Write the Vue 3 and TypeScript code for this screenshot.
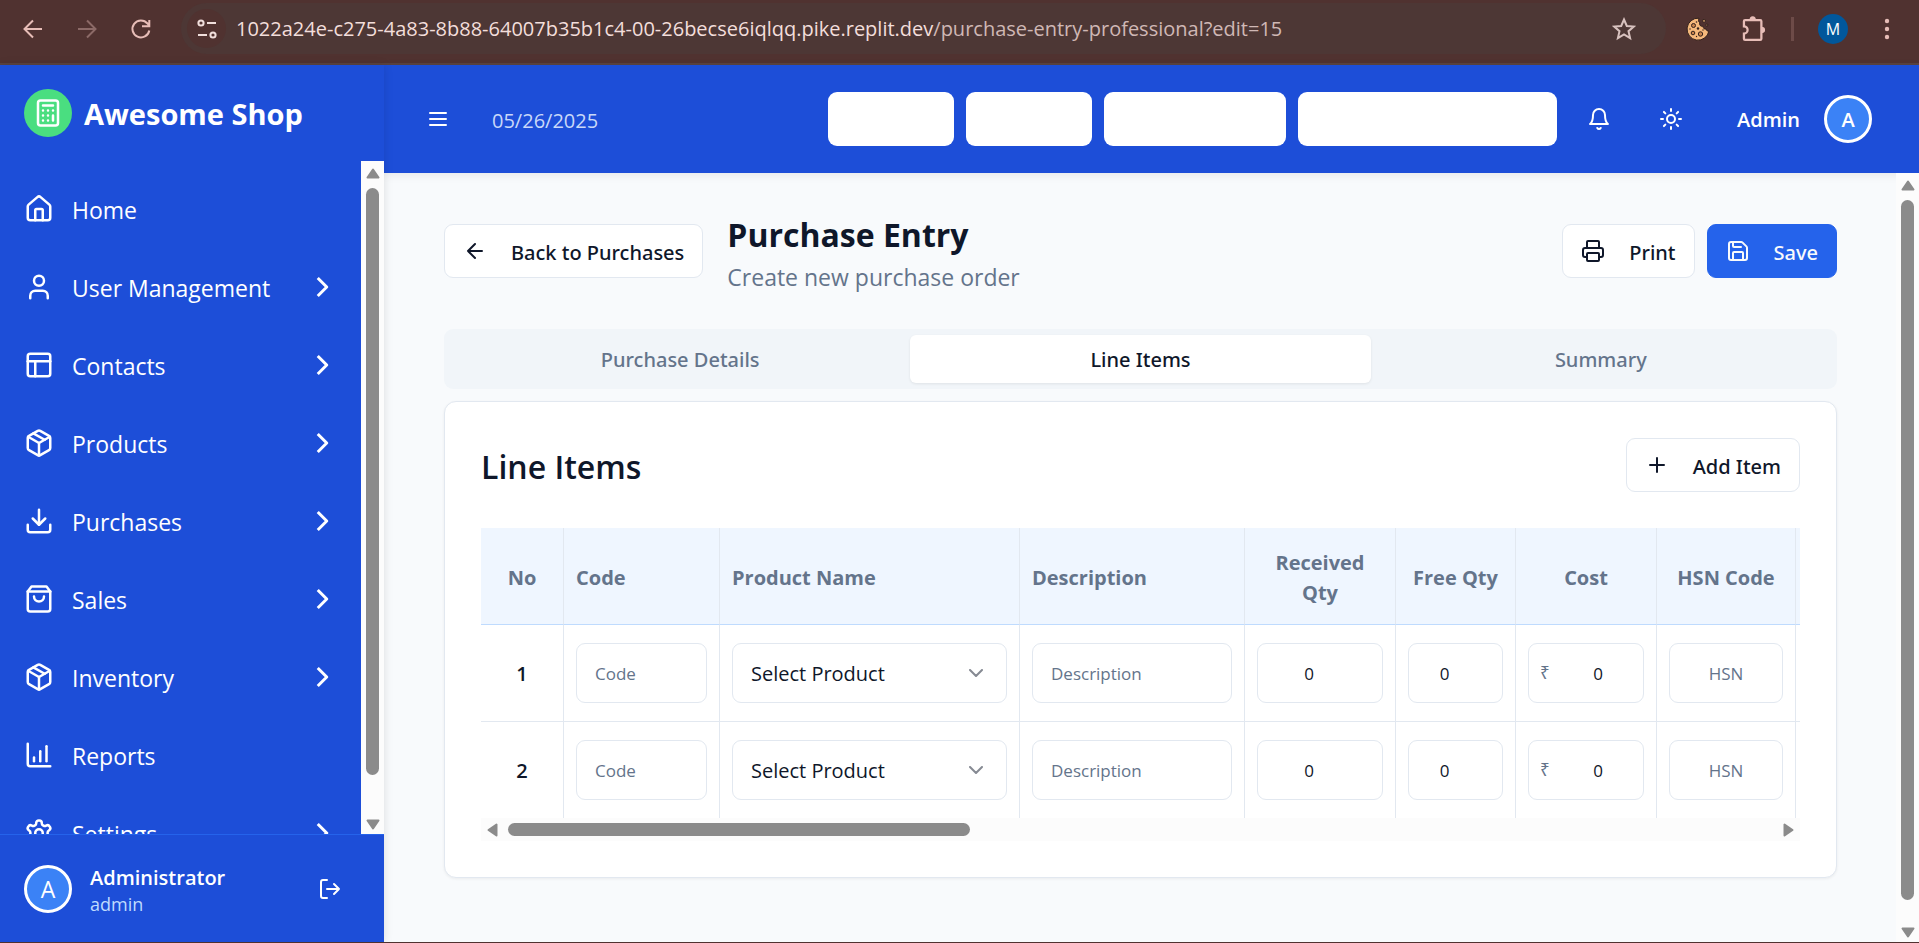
<script setup lang="ts">
import { ref } from 'vue'

interface NavItem { label: string; paths: string[]; expandable: boolean }
interface Line { id: number; code: string; product: string; description: string; received: number; free: number; cost: number; hsn: string }

const box = [
  'M11 21.73a2 2 0 0 0 2 0l7-4A2 2 0 0 0 21 16V8a2 2 0 0 0-1-1.73l-7-4a2 2 0 0 0-2 0l-7 4A2 2 0 0 0 3 8v8a2 2 0 0 0 1 1.73z',
  'M12 22V12', 'M3.3 7L12 12l8.7-5', 'm7.5 4.27 9 5.15',
]

const navItems: NavItem[] = [
  { label: 'Home', expandable: false, paths: ['M15 21v-8a1 1 0 0 0-1-1h-4a1 1 0 0 0-1 1v8', 'M3 10a2 2 0 0 1 .709-1.528l7-5.999a2 2 0 0 1 2.582 0l7 5.999A2 2 0 0 1 21 10v9a2 2 0 0 1-2 2H5a2 2 0 0 1-2-2z'] },
  { label: 'User Management', expandable: true, paths: ['M19 21v-2a4 4 0 0 0-4-4H9a4 4 0 0 0-4 4v2', 'M8 7a4 4 0 1 0 8 0a4 4 0 1 0-8 0'] },
  { label: 'Contacts', expandable: true, paths: ['M5 3h14a2 2 0 0 1 2 2v14a2 2 0 0 1-2 2H5a2 2 0 0 1-2-2V5a2 2 0 0 1 2-2z', 'M3 9h18', 'M9 21V9'] },
  { label: 'Products', expandable: true, paths: box },
  { label: 'Purchases', expandable: true, paths: ['M21 15v4a2 2 0 0 1-2 2H5a2 2 0 0 1-2-2v-4', 'M7 10l5 5 5-5', 'M12 15V3'] },
  { label: 'Sales', expandable: true, paths: ['M6 2 3 6v14a2 2 0 0 0 2 2h14a2 2 0 0 0 2-2V6l-3-4z', 'M3 6h18', 'M16 10a4 4 0 0 1-8 0'] },
  { label: 'Inventory', expandable: true, paths: box },
  { label: 'Reports', expandable: false, paths: ['M3 3v16a2 2 0 0 0 2 2h16', 'M18 17V5', 'M13 17V9', 'M8 17v-3'] },
  { label: 'Settings', expandable: true, paths: ['M12.22 2h-.44a2 2 0 0 0-2 2v.18a2 2 0 0 1-1 1.73l-.43.25a2 2 0 0 1-2 0l-.15-.08a2 2 0 0 0-2.73.73l-.22.38a2 2 0 0 0 .73 2.73l.15.1a2 2 0 0 1 1 1.72v.51a2 2 0 0 1-1 1.74l-.15.09a2 2 0 0 0-.73 2.73l.22.38a2 2 0 0 0 2.73.73l.15-.08a2 2 0 0 1 2 0l.43.25a2 2 0 0 1 1 1.73V20a2 2 0 0 0 2 2h.44a2 2 0 0 0 2-2v-.18a2 2 0 0 1 1-1.73l.43-.25a2 2 0 0 1 2 0l.15.08a2 2 0 0 0 2.73-.73l.22-.39a2 2 0 0 0-.73-2.73l-.15-.08a2 2 0 0 1-1-1.74v-.5a2 2 0 0 1 1-1.74l.15-.09a2 2 0 0 0 .73-2.73l-.22-.38a2 2 0 0 0-2.73-.73l-.15.08a2 2 0 0 1-2 0l-.43-.25a2 2 0 0 1-1-1.73V4a2 2 0 0 0-2-2z', 'M9 12a3 3 0 1 0 6 0a3 3 0 1 0-6 0'] },
]

const tabs = ['Purchase Details', 'Line Items', 'Summary']
const activeTab = ref('Line Items')

const newLine = (id: number): Line => ({ id, code: '', product: '', description: '', received: 0, free: 0, cost: 0, hsn: '' })
const lines = ref<Line[]>([newLine(1), newLine(2)])
const addLine = () => lines.value.push(newLine(lines.value.length + 1))
</script>

<template>
  <div class="window">
    <div class="browser">
      <button class="tool" aria-label="Back"><svg viewBox="0 0 24 24"><path d="M21 12H4M12 3.500L3.500 12l8.500 8.500" /></svg></button>
      <button class="tool dim" aria-label="Forward"><svg viewBox="0 0 24 24"><path d="M3 12h17M12 3.500l8.500 8.500-8.500 8.500" /></svg></button>
      <button class="tool" aria-label="Reload"><svg viewBox="0 0 24 24"><path d="M20.300 13.500A8.500 8.500 0 1 1 18.500 6.500L20 8.500M20.300 3v6.300H13" /></svg></button>
      <div class="address">
        <button class="site" aria-label="Site information">
          <svg viewBox="0 0 24 24"><circle cx="6" cy="6" r="2.600" /><path d="M12 6h9M3 18h9" /><circle cx="18" cy="18" r="2.600" /></svg>
        </button>
        <p class="url">1022a24e-c275-4a83-8b88-64007b35b1c4-00-26becse6iqlqq.pike.replit.dev<span>/purchase-entry-professional?edit=15</span></p>
        <button class="tool star" aria-label="Bookmark"><svg viewBox="0 0 24 24"><path d="M12 2.500l2.800 6.500 7 .6-5.300 4.600 1.600 6.900-6.100-3.700-6.100 3.700 1.600-6.900-5.300-4.600 7-.6z" /></svg></button>
      </div>
      <button class="tool cookie" aria-label="Cookies">
        <svg viewBox="0 0 24 24"><path class="biscuit" d="M13 1.200A11 11 0 1 0 22.900 14c-1.700.3-2.700-.5-2.700-2-2.100.3-3.300-.8-2.900-2.700-2.800.4-4.300-1.300-3.500-3.600-1.500-1-1.700-2.800-.8-4.500z" /><circle class="chip" cx="7.500" cy="8.500" r="2" /><circle class="chip" cx="7" cy="16" r="1.800" /><circle class="chip" cx="14.500" cy="17" r="2.200" /><circle class="crumb" cx="12" cy="11.500" r="1.200" /><circle class="crumb" cx="10.500" cy="5" r=".8" /><circle class="crumb" cx="4" cy="12" r=".7" /><circle class="crumb" cx="10.500" cy="19.500" r=".7" /><circle class="crumb" cx="17" cy="13" r=".7" /><path class="biscuit" d="M17 2.500l2.500.5-.6 2.400-2.300-.6zM20 7l2 .4-.5 1.700-1.800-.4z" /></svg>
      </button>
      <button class="tool puzzle" aria-label="Extensions"><svg viewBox="0 0 24 24"><path d="M4.500 4.500H18a1 1 0 0 1 1 1V21a1 1 0 0 1-1 1H4.500a1 1 0 0 1-1-1v-4.500a3.200 3.200 0 0 0 0-6.500V5.500a1 1 0 0 1 1-1z" /><path class="solid" d="M8.500 4.500a2.800 3.300 0 0 1 5.600 0zM19 10.500a3.300 2.800 0 0 1 0 5.600z" /></svg></button>
      <span class="divider"></span>
      <button class="profile" aria-label="Profile">M</button>
      <button class="tool more" aria-label="More"><svg viewBox="0 0 24 24"><circle cx="12" cy="4" r="2.200" /><circle cx="12" cy="12" r="2.200" /><circle cx="12" cy="20" r="2.200" /></svg></button>
    </div>

    <div class="app">
      <aside class="sidebar">
        <div class="brand">
          <span class="logo"><svg class="icon lg" viewBox="0 0 24 24"><rect x="4" y="2" width="16" height="20" rx="2" /><path d="M8 6h8M16 14v4M16 10h.01M12 10h.01M8 10h.01M12 14h.01M8 14h.01M12 18h.01M8 18h.01" /></svg></span>
          <strong>Awesome Shop</strong>
        </div>
        <div class="nav-area">
          <nav>
            <a v-for="item in navItems" :key="item.label" href="#">
              <svg class="icon lg" viewBox="0 0 24 24"><path v-for="d in item.paths" :key="d" :d="d" /></svg>
              <span>{{ item.label }}</span>
              <svg v-if="item.expandable" class="icon chevron" viewBox="0 0 24 24"><path d="M8.500 6l6 6-6 6" /></svg>
            </a>
          </nav>
          <div class="scroll-y">
            <svg viewBox="0 0 14 11"><path d="M7 1.500L12.500 9.500h-11z" /></svg>
            <div class="track"><span class="thumb nav-thumb"></span></div>
            <svg viewBox="0 0 14 11"><path d="M7 9.500L1.500 1.500h11z" /></svg>
          </div>
        </div>
        <div class="account">
          <span class="avatar plain">A</span>
          <div class="who"><strong>Administrator</strong><span>admin</span></div>
          <button class="ghost" aria-label="Log out"><svg class="icon" viewBox="0 0 24 24"><path d="M9 21H5a2 2 0 0 1-2-2V5a2 2 0 0 1 2-2h4M16 17l5-5-5-5M21 12H9" /></svg></button>
        </div>
      </aside>

      <div class="page">
        <header class="topbar">
          <button class="ghost" aria-label="Toggle menu"><svg class="icon" viewBox="0 0 24 24"><path d="M4 6h16M4 12h16M4 18h16" /></svg></button>
          <time>05/26/2025</time>
          <div class="shortcuts">
            <button class="w-a" aria-label="Shortcut 1"></button>
            <button class="w-a" aria-label="Shortcut 2"></button>
            <button class="w-b" aria-label="Shortcut 3"></button>
            <button class="w-c" aria-label="Shortcut 4"></button>
          </div>
          <div class="actions">
            <button class="ghost" aria-label="Notifications"><svg class="icon" viewBox="0 0 24 24"><path d="M6 8a6 6 0 0 1 12 0c0 7 3 9 3 9H3s3-2 3-9M10.300 21a1.940 1.940 0 0 0 3.400 0" /></svg></button>
            <button class="ghost" aria-label="Theme"><svg class="icon" viewBox="0 0 24 24"><circle cx="12" cy="12" r="4" /><path d="M12 2v2M12 20v2M4.930 4.930l1.410 1.410M17.660 17.660l1.410 1.410M2 12h2M20 12h2M6.340 17.660l-1.410 1.410M19.070 4.930l-1.410 1.410" /></svg></button>
          </div>
          <button class="user"><span>Admin</span><span class="avatar">A</span></button>
        </header>

        <div class="body">
          <main>
            <div class="heading">
              <button class="btn"><svg class="icon" viewBox="0 0 24 24"><path d="M12 19l-7-7 7-7M19 12H5" /></svg><span>Back to Purchases</span></button>
              <div class="titles"><h1>Purchase Entry</h1><p>Create new purchase order</p></div>
              <div class="buttons">
                <button class="btn"><svg class="icon" viewBox="0 0 24 24"><path d="M6 18H4a2 2 0 0 1-2-2v-5a2 2 0 0 1 2-2h16a2 2 0 0 1 2 2v5a2 2 0 0 1-2 2h-2M6 9V3a1 1 0 0 1 1-1h10a1 1 0 0 1 1 1v6" /><rect x="6" y="14" width="12" height="8" rx="1" /></svg><span>Print</span></button>
                <button class="btn primary"><svg class="icon" viewBox="0 0 24 24"><path d="M15.200 3a2 2 0 0 1 1.400.6l3.800 3.800a2 2 0 0 1 .6 1.400V19a2 2 0 0 1-2 2H5a2 2 0 0 1-2-2V5a2 2 0 0 1 2-2zM17 21v-7a1 1 0 0 0-1-1H8a1 1 0 0 0-1 1v7M7 3v4a1 1 0 0 0 1 1h7" /></svg><span>Save</span></button>
              </div>
            </div>

            <div class="tabs" role="tablist">
              <button v-for="tab in tabs" :key="tab" role="tab" :aria-selected="tab === activeTab" :class="{ active: tab === activeTab }" @click="activeTab = tab">{{ tab }}</button>
            </div>

            <section class="card">
              <div class="card-head">
                <h2>Line Items</h2>
                <button class="btn" @click="addLine"><svg class="icon" viewBox="0 0 24 24"><path d="M5 12h14M12 5v14" /></svg><span>Add Item</span></button>
              </div>
              <div class="table-wrap">
                <table>
                  <colgroup><col class="c-no" /><col class="c-code" /><col class="c-product" /><col class="c-desc" /><col class="c-recv" /><col class="c-free" /><col class="c-cost" /><col class="c-hsn" /><col /></colgroup>
                  <thead>
                    <tr><th>No</th><th class="left">Code</th><th class="left">Product Name</th><th class="left">Description</th><th>Received Qty</th><th>Free Qty</th><th>Cost</th><th>HSN Code</th><th class="rest"></th></tr>
                  </thead>
                  <tbody>
                    <tr v-for="line in lines" :key="line.id">
                      <td class="no">{{ line.id }}</td>
                      <td><input v-model="line.code" type="text" placeholder="Code" aria-label="Code" /></td>
                      <td>
                        <div class="select">
                          <select v-model="line.product" aria-label="Product"><option value="">Select Product</option></select>
                          <svg class="icon" viewBox="0 0 24 24"><path d="M6 9l6 6 6-6" /></svg>
                        </div>
                      </td>
                      <td><input v-model="line.description" type="text" placeholder="Description" aria-label="Description" /></td>
                      <td><input v-model="line.received" class="num" type="number" aria-label="Received quantity" /></td>
                      <td><input v-model="line.free" class="num" type="number" aria-label="Free quantity" /></td>
                      <td><div class="money"><span>₹</span><input v-model="line.cost" type="number" aria-label="Cost" /></div></td>
                      <td><input v-model="line.hsn" class="mid" type="text" placeholder="HSN" aria-label="HSN code" /></td>
                      <td class="rest"></td>
                    </tr>
                  </tbody>
                </table>
              </div>
              <div class="scroll-x">
                <svg viewBox="0 0 11 14"><path d="M1.500 7L9.500 1.500v11z" /></svg>
                <div class="track"><span class="thumb"></span></div>
                <svg viewBox="0 0 11 14"><path d="M9.500 7L1.500 1.500v11z" /></svg>
              </div>
            </section>
          </main>
          <div class="scroll-y">
            <svg viewBox="0 0 14 11"><path d="M7 1.500L12.500 9.500h-11z" /></svg>
            <div class="track"><span class="thumb page-thumb"></span></div>
            <svg viewBox="0 0 14 11"><path d="M7 9.500L1.500 1.500h11z" /></svg>
          </div>
        </div>
      </div>
    </div>
  </div>
</template>

<style>
body { margin: 0; }
</style>

<style scoped>
* { box-sizing: border-box; }
.window { height: 100vh; display: flex; flex-direction: column; font-family: "Open Sans", "Noto Sans", sans-serif; font-size: 20px; color: #0f172a; overflow: hidden; border-bottom: 1px solid #503230; }
button, input, select { font: inherit; color: inherit; margin: 0; }
button { border: 0; padding: 0; background: none; cursor: pointer; }
h1, h2, p { margin: 0; }
.icon { width: 24px; height: 24px; flex: none; fill: none; stroke: currentColor; stroke-width: 2; stroke-linecap: round; stroke-linejoin: round; }
.icon.lg { width: 30px; height: 30px; }
.icon.chevron { width: 36px; height: 36px; margin-left: auto; stroke-linecap: butt; }

.browser { flex: none; height: 65px; display: flex; align-items: center; padding: 0 20px 6px 21px; background: #503230; border-bottom: 2px solid #5a4340; }
.tool { width: 24px; height: 24px; display: flex; flex: none; color: #e7bdb7; }
.tool + .tool { margin-left: 30px; }
.tool svg { width: 100%; height: 100%; fill: none; stroke: currentColor; stroke-width: 2; }
.tool.dim { color: #8c6a67; }
.address { flex: 1; height: 51px; margin: 0 20px 0 28px; padding: 0 30px 0 6px; display: flex; align-items: center; border-radius: 26px; background: #4d3735; }
.site { width: 39px; height: 39px; flex: none; display: grid; place-items: center; border-radius: 50%; background: #503230; color: #f0dedb; }
.site svg { width: 24px; height: 24px; fill: none; stroke: currentColor; stroke-width: 2; }
.url { flex: 1; margin-left: 10px; white-space: nowrap; color: #f3dedb; }
.url span { color: #d0b8b5; }
.star { color: #d8c2bf; }
.cookie .biscuit { fill: #f5b97c; stroke: #33211c; stroke-width: 1; }
.cookie .chip { fill: #c9854f; stroke: #33211c; stroke-width: 1; }
.cookie .crumb { fill: #33211c; stroke: none; }
.tool.puzzle { width: 27px; height: 27px; }
.tool .solid { fill: currentColor; stroke: none; }
.divider { width: 3px; height: 24px; margin: 0 24px; background: #6d4b48; }
.profile { width: 30px; height: 30px; border-radius: 50%; background: #01579b; color: #fff; font-size: 16px; }
.more { margin-left: 27px; }
.more svg { fill: currentColor; stroke: none; }

.app { flex: 1; min-height: 0; display: flex; }
.sidebar { width: 384px; flex: none; display: flex; flex-direction: column; background: #1d4ed8; color: #fff; box-shadow: 0 0 9px rgba(0, 0, 0, .12); z-index: 1; }
.brand { height: 96px; flex: none; display: flex; align-items: center; gap: 12px; padding: 0 24px; }
.brand strong { font-size: 29px; line-height: 42px; padding-top: 2px; }
.logo { width: 48px; height: 48px; flex: none; display: grid; place-items: center; border-radius: 50%; background: #4ade80; }
.nav-area { flex: 1; min-height: 0; display: flex; overflow: hidden; }
nav { flex: 1; padding: 12px 0; display: flex; flex-direction: column; gap: 6px; }
nav a { height: 72px; flex: none; display: flex; align-items: center; gap: 18px; padding: 0 20px 0 24px; color: #fff; text-decoration: none; font-size: 23px; line-height: 36px; }
nav a span { padding-top: 2px; }
.scroll-y { width: 23px; flex: none; padding: 7px 0 4px; display: flex; flex-direction: column; align-items: center; background: #fcfcfc; }
.scroll-y svg { width: 14px; height: 11px; flex: none; fill: #8b8b8b; stroke: #8b8b8b; stroke-width: 2; stroke-linejoin: round; }
.scroll-y .track { flex: 1; margin: 9px 0; }
.thumb { display: block; border-radius: 7px; background: #8b8b8b; }
.nav-thumb { width: 13px; height: 94.4%; }
.page-thumb { width: 13px; height: 97.5%; }
.account { height: 108px; flex: none; display: flex; align-items: center; padding: 0 27px 0 24px; border-top: 1px solid #2563eb; }
.avatar { width: 48px; height: 48px; flex: none; display: grid; place-items: center; border: 3px solid #fff; border-radius: 50%; background: #3b82f6; font-weight: 600; }
.avatar.plain { font-size: 23px; font-weight: 400; }
.who { flex: 1; margin-left: 18px; padding-top: 4px; display: flex; flex-direction: column; line-height: 26px; }
.who strong { font-weight: 600; }
.who span { font-size: 18px; color: #bfdbfe; }
.ghost { width: 54px; height: 54px; flex: none; display: grid; place-items: center; }

.page { flex: 1; min-width: 0; display: flex; flex-direction: column; background: #f8fafc; }
.topbar { height: 108px; flex: none; display: flex; align-items: center; padding: 0 47px 0 27px; background: #1d4ed8; color: #fff; box-shadow: 0 2px 9px rgba(0, 0, 0, .08); }
.topbar time { margin-left: 27px; padding-top: 2px; color: #c9d8f8; }
.shortcuts { margin-left: auto; display: flex; gap: 12px; }
.shortcuts button { height: 54px; border-radius: 9px; background: #fff; }
.shortcuts .w-a { width: 126px; }
.shortcuts .w-b { width: 182px; }
.shortcuts .w-c { width: 259px; }
.actions { margin-left: 15px; display: flex; gap: 18px; }
.user { margin-left: 39px; display: flex; align-items: center; gap: 24px; font-weight: 600; }

.body { flex: 1; min-height: 0; display: flex; }
main { flex: 1; min-width: 0; padding: 36px 59px 36px 60px; overflow: hidden; }
.heading { display: flex; align-items: center; gap: 24px; margin-bottom: 36px; }
.buttons { margin-left: auto; display: flex; gap: 12px; }
h1 { font-size: 32px; line-height: 48px; font-weight: 700; padding-top: 2px; }
.titles { height: 84px; }
.titles p { font-size: 23px; line-height: 36px; color: #64748b; }
.btn { height: 54px; display: flex; align-items: center; gap: 24px; padding: 0 18px; border: 1px solid #e2e8f0; border-radius: 9px; background: #fff; font-family: "Noto Sans", "Open Sans", sans-serif; font-weight: 500; white-space: nowrap; }
.btn span { padding-top: 2px; }
.btn.primary { background: #2563eb; border-color: #2563eb; color: #f8fafc; }
.tabs { height: 60px; padding: 6px; display: grid; grid-template-columns: repeat(3, 1fr); border-radius: 9px; background: #f1f5f9; margin-bottom: 12px; }
.tabs button { border-radius: 6px; font-family: "Noto Sans", "Open Sans", sans-serif; font-weight: 500; color: #64748b; }
.tabs .active { background: #fff; color: #0f172a; box-shadow: 0 1px 3px rgba(0, 0, 0, .08); }
.card { padding: 36px; border: 1px solid #e2e8f0; border-radius: 12px; background: #fff; box-shadow: 0 1px 3px rgba(0, 0, 0, .06); }
.card-head { display: flex; align-items: center; justify-content: space-between; margin-bottom: 36px; }
h2 { font-size: 32px; line-height: 36px; font-weight: 600; padding-top: 3px; }
.table-wrap { overflow: hidden; }
table { width: 100%; table-layout: fixed; border-collapse: separate; border-spacing: 0; }
.c-no { width: 83px; } .c-code { width: 156px; } .c-product { width: 300px; } .c-desc { width: 225px; }
.c-recv { width: 151px; } .c-free { width: 120px; } .c-cost { width: 141px; } .c-hsn { width: 139px; }
th { height: 97px; padding: 19px 12px 16px; border-right: 1px solid #e2e8f0; border-bottom: 1px solid #bfdbfe; background: #eff6ff; color: #64748b; font-weight: 700; line-height: 30px; text-align: center; }
th.left { text-align: left; }
td { padding: 18px 12px; border-right: 1px solid #e2e8f0; border-bottom: 1px solid #e2e8f0; }
tr:last-child td { border-bottom: 0; }
th.rest, td.rest { padding: 0; border-right: 0; }
.no { text-align: center; font-weight: 600; }
input, select { display: block; width: 100%; height: 60px; padding: 0 18px; border: 1px solid #e2e8f0; border-radius: 9px; background: #fff; outline: 0; }
input { font-size: 17px; appearance: textfield; }
input::placeholder { color: #64748b; opacity: 1; }
input::-webkit-inner-spin-button { appearance: none; margin: 0; }
select { appearance: none; font-size: 20px; }
.select, .money { position: relative; }
.select .icon { position: absolute; right: 19px; top: 18px; opacity: .5; pointer-events: none; }
.num { padding-right: 40px; text-align: center; }
.mid { text-align: center; }
.money span { position: absolute; left: 12px; top: 18px; font-size: 17px; line-height: 24px; color: #64748b; }
.money input { padding: 0 24px 0 48px; text-align: center; }
.scroll-x { height: 23px; display: flex; align-items: center; padding: 0 6px; background: #fcfcfc; }
.scroll-x svg { width: 11px; height: 14px; flex: none; fill: #8b8b8b; stroke: #8b8b8b; stroke-width: 2; stroke-linejoin: round; }
.scroll-x .track { flex: 1; margin: 0 10px; }
.scroll-x .thumb { width: 36.5%; height: 13px; }
</style>
